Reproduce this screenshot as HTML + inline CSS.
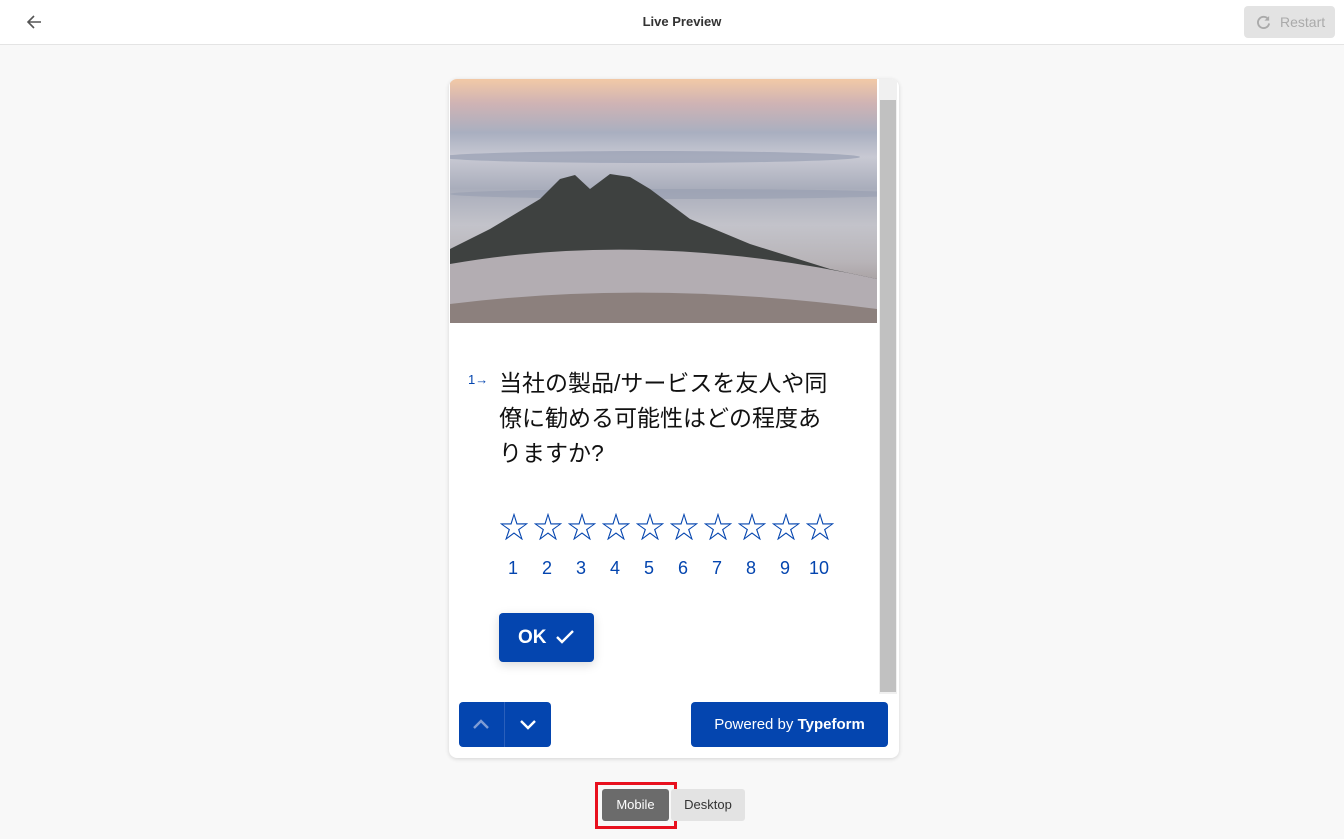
<!DOCTYPE html>
<html><head><meta charset="utf-8"><style>
*{box-sizing:border-box;margin:0;padding:0}
body{width:1344px;height:839px;background:#f8f8f8;font-family:"Liberation Sans","Noto Sans CJK JP",sans-serif;position:relative;overflow:hidden}
.top{position:absolute;left:0;top:0;width:1344px;height:45px;background:#fff;border-bottom:1px solid #e4e4e4}
.title{position:absolute;left:10px;width:100%;top:14px;text-align:center;font-size:13px;font-weight:bold;color:#333}
.restart{position:absolute;left:1244px;top:6px;width:91px;height:32px;background:#e3e3e3;border-radius:4px;color:#aaa;font-size:14px;line-height:32px;padding-left:36px}
.card{position:absolute;left:449px;top:79px;width:450px;height:679px;background:#fff;border-radius:8px;box-shadow:0 1px 4px rgba(0,0,0,.15);overflow:hidden}
.img{position:absolute;left:1px;top:0;width:427px;height:244px;overflow:hidden;background:linear-gradient(180deg,#f2c9a6 0%,#cfb3b4 10%,#a9afc0 22%,#c8c9d3 32%,#a9adbb 45%,#c3c3ca 60%,#b8b4b8 75%,#9b9090 90%,#857a78 100%)}
.sb{position:absolute;left:430px;top:0;width:18px;height:615px;background:#f0f0f0}
.thumb{position:absolute;left:431px;top:21px;width:16px;height:592px;background:#c1c1c1}
.q{position:absolute;left:50px;top:287px;font-size:23px;line-height:35px;color:#111;width:340px}
.num{position:absolute;left:19px;top:293px;font-size:13px;color:#0445af}
.stars{position:absolute;left:48px;top:424px;color:#0445af;font-size:30px}
.stars span{display:inline-block;width:34px;text-align:center}
.nums span{display:inline-block;width:34px;text-align:center}
.nums{position:absolute;left:47px;top:479px;color:#0445af;font-size:18px}
.ok{position:absolute;left:50px;top:534px;width:95px;height:49px;background:#0445af;border-radius:4px;color:#fff;font-weight:bold;font-size:19px;line-height:49px;padding-left:19px;box-shadow:0 3px 10px rgba(0,0,0,.15)}
.nav{position:absolute;left:10px;top:623px;width:92px;height:45px;background:#0445af;border-radius:4px}
.pw{position:absolute;left:242px;top:623px;width:197px;height:45px;background:#0445af;border-radius:4px;color:#fff;font-size:15px;line-height:45px;text-align:center}
.tog{position:absolute;top:789px;height:32px;font-size:13px;line-height:32px;text-align:center;color:#333;border-radius:3px}
</style></head><body>
<div class="top">
<svg style="position:absolute;left:26px;top:14px" width="16" height="16" viewBox="0 0 16 16"><path d="M15 8H2M8 2L2 8l6 6" stroke="#555" stroke-width="1.6" fill="none"/></svg>
<div class="title">Live Preview</div>
<div class="restart"><svg style="position:absolute;left:12px;top:9px" width="15" height="15" viewBox="0 0 16 16"><path d="M13 4.5A6 6 0 1 0 14 9" stroke="#aaa" stroke-width="2" fill="none"/><path d="M14 1v5h-5z" fill="#aaa"/></svg>Restart</div>
</div>
<div class="card">
<div class="img"><svg width="427" height="244" viewBox="0 0 427 244" style="position:absolute;left:0;top:0">
<ellipse cx="200" cy="78" rx="210" ry="6" fill="#8f97ad" opacity=".6"/>
<ellipse cx="230" cy="115" rx="230" ry="5" fill="#9299ad" opacity=".5"/>
<path d="M40 150 L90 120 L110 100 L125 96 L140 110 L160 95 L180 98 L200 110 L240 140 L300 165 L380 190 L427 200 L427 244 L0 244 L0 170Z" fill="#3e4140"/>
<path d="M0 185 Q200 150 427 200 L427 244 L0 244Z" fill="#b3adb2"/>
<path d="M0 225 Q200 200 427 230 L427 244 L0 244Z" fill="#8c807d"/>
</svg></div>
<div class="sb"></div><div class="thumb"></div>
<div class="num">1→</div>
<div class="q">当社の製品/サービスを友人や同僚に勧める可能性はどの程度ありますか?</div>
<div class="stars"><span>☆</span><span>☆</span><span>☆</span><span>☆</span><span>☆</span><span>☆</span><span>☆</span><span>☆</span><span>☆</span><span>☆</span></div>
<div class="nums"><span>1</span><span>2</span><span>3</span><span>4</span><span>5</span><span>6</span><span>7</span><span>8</span><span>9</span><span>10</span></div>
<div class="ok">OK <svg style="position:absolute;left:56px;top:16px" width="20" height="16" viewBox="0 0 20 16"><path d="M2 8l5 5L18 2" stroke="#fff" stroke-width="2.4" fill="none"/></svg></div>
<div class="nav"><div style="position:absolute;left:45px;top:0;width:1px;height:45px;background:#2a5fbb"></div>
<svg style="position:absolute;left:13px;top:16px" width="18" height="12" viewBox="0 0 18 12"><path d="M2 10l7-7 7 7" stroke="#7f9cd4" stroke-width="2.4" fill="none"/></svg>
<svg style="position:absolute;left:60px;top:17px" width="18" height="12" viewBox="0 0 18 12"><path d="M2 2l7 7 7-7" stroke="#fff" stroke-width="2.4" fill="none"/></svg></div>
<div class="pw">Powered by <b>Typeform</b></div>
</div>
<div style="position:absolute;left:595px;top:782px;width:82px;height:47px;border:3px solid #e8101e"></div>
<div class="tog" style="left:602px;width:67px;background:#6b6b6b;color:#fff">Mobile</div>
<div class="tog" style="left:671px;width:74px;background:#e3e3e3">Desktop</div>
</body></html>
